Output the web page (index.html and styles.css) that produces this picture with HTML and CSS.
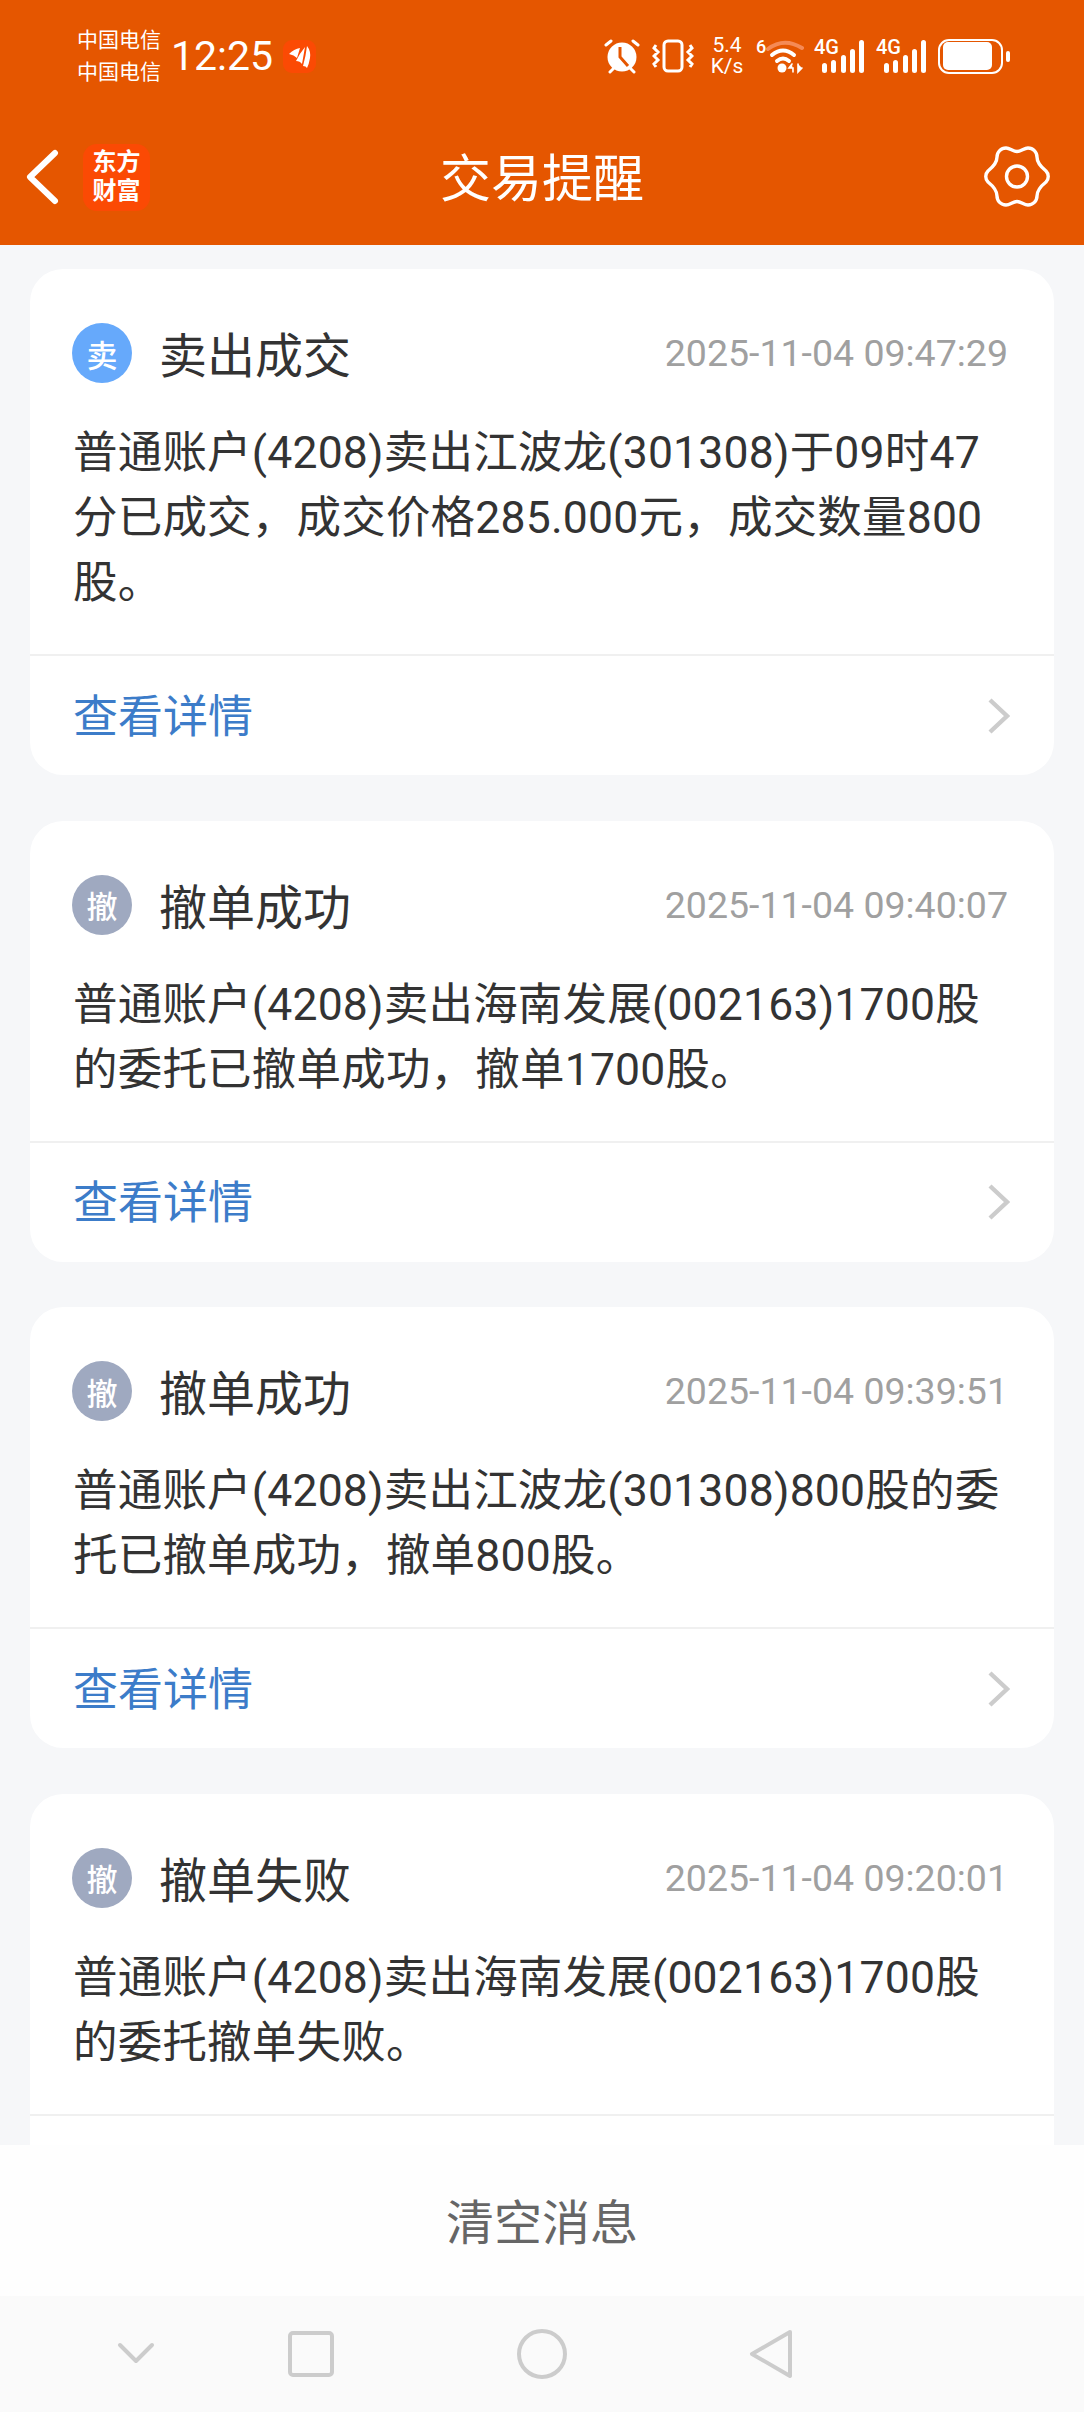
FILE: index.html
```html
<!DOCTYPE html>
<html lang="zh-CN">
<head>
<meta charset="UTF-8">
<meta name="viewport" content="width=device-width, initial-scale=1.0">
<title>交易提醒</title>
<link rel="stylesheet" href="styles.css">
</head>
<body>
<div class="page">
    <header class="header">
        <div class="status-bar">
            <div class="carriers"><span>中国电信</span><span>中国电信</span></div>
            <span class="clock">12:25</span>
            <span class="mini-app">
                <svg width="33" height="33" viewBox="0 0 33 33" fill="#fff"><path d="M6 14 Q11 9 17 8 L14 18 Q11 15 6 14 Z"/><path d="M13 21 Q17 13 22 7 L19 24 Q17 21 13 21 Z"/><path d="M20 26 Q23 15 24 6 Q28 11 27 18 Q26 24 24 28 Q23 26 20 26 Z"/></svg>
            </span>
            <div class="status-icons">
                <svg class="ic-alarm" width="36" height="35" viewBox="0 0 36 35">
                    <circle cx="18" cy="18" r="14.5" fill="#fff"/>
                    <path d="M16 8 V18 L24 27" fill="none" stroke="#e55600" stroke-width="3"/>
                    <path d="M2 6 L7 2 M34 6 L29 2 M6 33 L10 29 M30 33 L26 29" stroke="#fff" stroke-width="3" stroke-linecap="round"/>
                </svg>
                <svg class="ic-vibrate" width="42" height="34" viewBox="0 0 42 34" fill="none" stroke="#fff">
                    <rect x="12" y="2" width="18" height="30" rx="4" stroke-width="3"/>
                    <path d="M4 6 L2 9 L6 13 L2 17 L6 21 L2 25 L4 28 M38 6 L40 9 L36 13 L40 17 L36 21 L40 25 L38 28" stroke-width="3"/>
                </svg>
                <div class="speed"><span>5.4</span><span>K/s</span></div>
                <div class="wifi">
                    <span class="wifi-six">6</span>
                    <svg width="38" height="34" viewBox="0 0 38 34" fill="none" stroke-linecap="round">
                        <path d="M2 9 Q18 -3 36 8" stroke="#f58a55" stroke-width="4"/>
                        <path d="M6 15 Q17 6 28 15" stroke="#fff" stroke-width="4"/>
                        <path d="M11 21 Q17 16 23 21" stroke="#fff" stroke-width="4"/>
                        <circle cx="16" cy="28" r="4.5" fill="#fff"/>
                        <path d="M26 24 L23 28 H27 V32 M32 24 V32 L36 28" fill="#fff" stroke="#fff" stroke-width="1.6"/>
                    </svg>
                </div>
                <div class="signal"><span class="sig-type">4G</span><i class="b1"></i><i class="b2"></i><i class="b3"></i><i class="b4"></i><i class="b5"></i></div>
                <div class="signal"><span class="sig-type">4G</span><i class="b1"></i><i class="b2"></i><i class="b3"></i><i class="b4"></i><i class="b5"></i></div>
                <div class="battery"><div class="battery-body"><div class="battery-fill"></div></div><div class="battery-tip"></div></div>
            </div>
        </div>
        <div class="toolbar">
            <svg class="back" width="34" height="56" viewBox="0 0 34 56"><path d="M30 4 L5 28 L30 52" fill="none" stroke="#fff" stroke-width="6" stroke-linecap="round" stroke-linejoin="round"/></svg>
            <div class="brand"><span>东方</span><span>财富</span></div>
            <h1 class="title">交易提醒</h1>
            <svg class="gear" width="66" height="66" viewBox="-2 -2 66 66" fill="none" stroke="#fff" stroke-width="3.4" stroke-linejoin="round">
                <path d="M31 5.5 C35 5.5 38 2 42 2 C47 2 51 6 51 11 C51 17 55 21 60 25 C63 28 63 33 60 36 C55 40 51 44 51 50 C51 55 47 59 42 59 C38 59 35 55.5 31 55.5 C27 55.5 24 59 20 59 C15 59 11 55 11 50 C11 44 7 40 2 36 C-1 33 -1 28 2 25 C7 21 11 17 11 11 C11 6 15 2 20 2 C24 2 27 5.5 31 5.5 Z"/>
                <circle cx="31" cy="30.5" r="10.5"/>
            </svg>
        </div>
    </header>

    <main class="list">
        <section class="card">
            <div class="card-head">
                <span class="badge badge-sell">卖</span>
                <span class="card-title">卖出成交</span>
                <span class="card-time">2025-11-04 09:47:29</span>
            </div>
            <p class="card-body">普通账户(4208)卖出江波龙(301308)于09时47分已成交，成交价格285.000元，成交数量800股。</p>
            <div class="card-link"><span>查看详情</span><svg width="23" height="38" viewBox="0 0 23 38"><path d="M3 3 L20 19 L3 35" fill="none" stroke="#ccc" stroke-width="4.4"/></svg></div>
        </section>
        <section class="card">
            <div class="card-head">
                <span class="badge">撤</span>
                <span class="card-title">撤单成功</span>
                <span class="card-time">2025-11-04 09:40:07</span>
            </div>
            <p class="card-body">普通账户(4208)卖出海南发展(002163)1700股的委托已撤单成功，撤单1700股。</p>
            <div class="card-link"><span>查看详情</span><svg width="23" height="38" viewBox="0 0 23 38"><path d="M3 3 L20 19 L3 35" fill="none" stroke="#ccc" stroke-width="4.4"/></svg></div>
        </section>
        <section class="card">
            <div class="card-head">
                <span class="badge">撤</span>
                <span class="card-title">撤单成功</span>
                <span class="card-time">2025-11-04 09:39:51</span>
            </div>
            <p class="card-body">普通账户(4208)卖出江波龙(301308)800股的委托已撤单成功，撤单800股。</p>
            <div class="card-link"><span>查看详情</span><svg width="23" height="38" viewBox="0 0 23 38"><path d="M3 3 L20 19 L3 35" fill="none" stroke="#ccc" stroke-width="4.4"/></svg></div>
        </section>
        <section class="card">
            <div class="card-head">
                <span class="badge">撤</span>
                <span class="card-title">撤单失败</span>
                <span class="card-time">2025-11-04 09:20:01</span>
            </div>
            <p class="card-body">普通账户(4208)卖出海南发展(002163)1700股的委托撤单失败。</p>
        </section>
    </main>

    <div class="clear-bar">清空消息</div>

    <nav class="nav-bar">
        <svg class="nav-down" width="38" height="24" viewBox="0 0 38 24"><path d="M3 4 L19 20 L35 4" fill="none" stroke="#ccc" stroke-width="4" stroke-linecap="round" stroke-linejoin="round"/></svg>
        <svg class="nav-square" width="46" height="46" viewBox="0 0 46 46"><rect x="2" y="2" width="42" height="42" rx="3" fill="none" stroke="#ccc" stroke-width="4"/></svg>
        <svg class="nav-circle" width="50" height="50" viewBox="0 0 50 50"><circle cx="25" cy="25" r="23" fill="none" stroke="#ccc" stroke-width="4"/></svg>
        <svg class="nav-back" width="44" height="50" viewBox="0 0 44 50"><path d="M41 3 L3 25 L41 47 Z" fill="none" stroke="#ccc" stroke-width="4" stroke-linejoin="round"/></svg>
    </nav>
</div>
</body>
</html>
```

FILE: styles.css
```css
* {
    box-sizing: border-box;
}

body {
    margin: 0;
    font-family: Roboto, "Noto Sans CJK SC", sans-serif;
    background-color: #f6f7f9;
}

.page {
    display: flex;
    flex-direction: column;
    height: 2412px;
    overflow: hidden;
}

/* header */
.header {
    flex: none;
    height: 245px;
    background-color: #e55600;
    color: #fff;
}

.status-bar {
    display: flex;
    align-items: center;
    height: 112px;
    padding: 0 74px 0 77px;
}

.carriers {
    display: flex;
    flex-direction: column;
    gap: 8px;
    font-size: 21px;
    line-height: 24px;
}

.clock {
    margin-left: 10px;
    font-size: 41px;
    line-height: 48px;
}

.mini-app {
    display: flex;
    width: 33px;
    height: 33px;
    margin-left: 10px;
    border-radius: 9px;
    background-color: #fb4a04;
}

.status-icons {
    display: flex;
    align-items: center;
    margin-left: auto;
}

.ic-vibrate {
    margin-left: 12px;
}

.speed {
    display: flex;
    flex-direction: column;
    align-items: center;
    width: 34px;
    margin-left: 16px;
    font-size: 21px;
    line-height: 21px;
}

.wifi {
    position: relative;
    display: flex;
    justify-content: flex-end;
    align-items: flex-end;
    width: 48px;
    height: 36px;
    margin-left: 12px;
}

.wifi-six {
    position: absolute;
    left: 0;
    top: -1px;
    font-size: 18px;
    line-height: 20px;
    font-weight: 500;
}

.signal {
    position: relative;
    display: flex;
    align-items: flex-end;
    gap: 4.3px;
    width: 52px;
    height: 34px;
    margin-left: 10px;
    padding-left: 8px;
}

.sig-type {
    position: absolute;
    left: 0;
    top: -2px;
    font-size: 20px;
    line-height: 20px;
    font-weight: 500;
}

.signal i {
    display: block;
    width: 5px;
    border-radius: 3px;
    background-color: #fff;
}

.signal .b1 { height: 10px; }
.signal .b2 { height: 13px; }
.signal .b3 { height: 18px; }
.signal .b4 { height: 24px; }
.signal .b5 { height: 33px; }

.battery {
    display: flex;
    align-items: center;
    gap: 3px;
    margin-left: 10px;
}

.battery-body {
    width: 65px;
    height: 35px;
    padding: 1.5px 2.5px;
    border: 2.5px solid #fff;
    border-radius: 11px;
}

.battery-fill {
    width: 49px;
    height: 100%;
    border-radius: 5px;
    background-color: #fff;
}

.battery-tip {
    width: 4px;
    height: 11px;
    border-radius: 2px;
    background-color: #fff;
}

.toolbar {
    position: relative;
    display: flex;
    align-items: center;
    height: 130px;
    padding: 0 34px 0 25px;
}

.brand {
    display: flex;
    flex-direction: column;
    align-items: center;
    justify-content: center;
    width: 67px;
    height: 67px;
    margin-left: 24px;
    border-radius: 14px;
    background-color: #fb4a04;
    font-size: 24px;
    line-height: 29px;
    font-weight: 700;
}

.title {
    position: absolute;
    left: 0;
    right: 0;
    margin: 0;
    padding-bottom: 4px;
    text-align: center;
    font-size: 51px;
    font-weight: 400;
    pointer-events: none;
}

.gear {
    margin-left: auto;
}

/* message list */
.list {
    flex: 1;
    min-height: 0;
    overflow: hidden;
    display: flex;
    flex-direction: column;
    gap: 45.5px;
    padding: 24px 30px 0;
}

.card {
    flex: none;
    background-color: #fff;
    border-radius: 33px;
}

.card-head {
    display: flex;
    align-items: center;
    height: 114px;
    padding: 54px 46px 0 42px;
}

.badge {
    display: flex;
    align-items: center;
    justify-content: center;
    flex: none;
    width: 60px;
    height: 60px;
    border-radius: 50%;
    background-color: #9fa9c0;
    color: #fff;
    font-size: 31px;
    font-weight: 500;
}

.badge-sell {
    background-color: #66a9fb;
}

.card-title {
    margin: 0 0 2px 27px;
    font-size: 48px;
    color: #333;
}

.card-time {
    margin-left: auto;
    font-size: 37.5px;
    color: #a0a0a0;
}

.card-body {
    margin: 0;
    padding: 38px 45px 38px 43px;
    font-size: 44.5px;
    line-height: 65px;
    letter-spacing: 0.2px;
    color: #333;
}

.card-link {
    display: flex;
    align-items: center;
    justify-content: space-between;
    height: 121px;
    padding: 0 44px 0 43px;
    border-top: 2px solid #f0f0f0;
    font-size: 45px;
    color: #3c7cc9;
}

.card-link span {
    margin-bottom: 5px;
}

/* last card is cut off by the clear bar, only its divider shows */
.card:last-child {
    height: 520px;
}

.card:last-child .card-body {
    border-bottom: 2px solid #f0f0f0;
}

/* bottom bars */
.clear-bar {
    flex: none;
    height: 151px;
    display: flex;
    align-items: center;
    justify-content: center;
    padding-bottom: 4px;
    background-color: #fefefe;
    font-size: 48px;
    color: #666;
}

.nav-bar {
    flex: none;
    position: relative;
    height: 116px;
    background-color: #fafafa;
}

.nav-bar svg {
    position: absolute;
}

.nav-down { left: 117px; top: 45px; }
.nav-square { left: 288px; top: 35px; }
.nav-circle { left: 517px; top: 33px; }
.nav-back { left: 749px; top: 33px; }
```
